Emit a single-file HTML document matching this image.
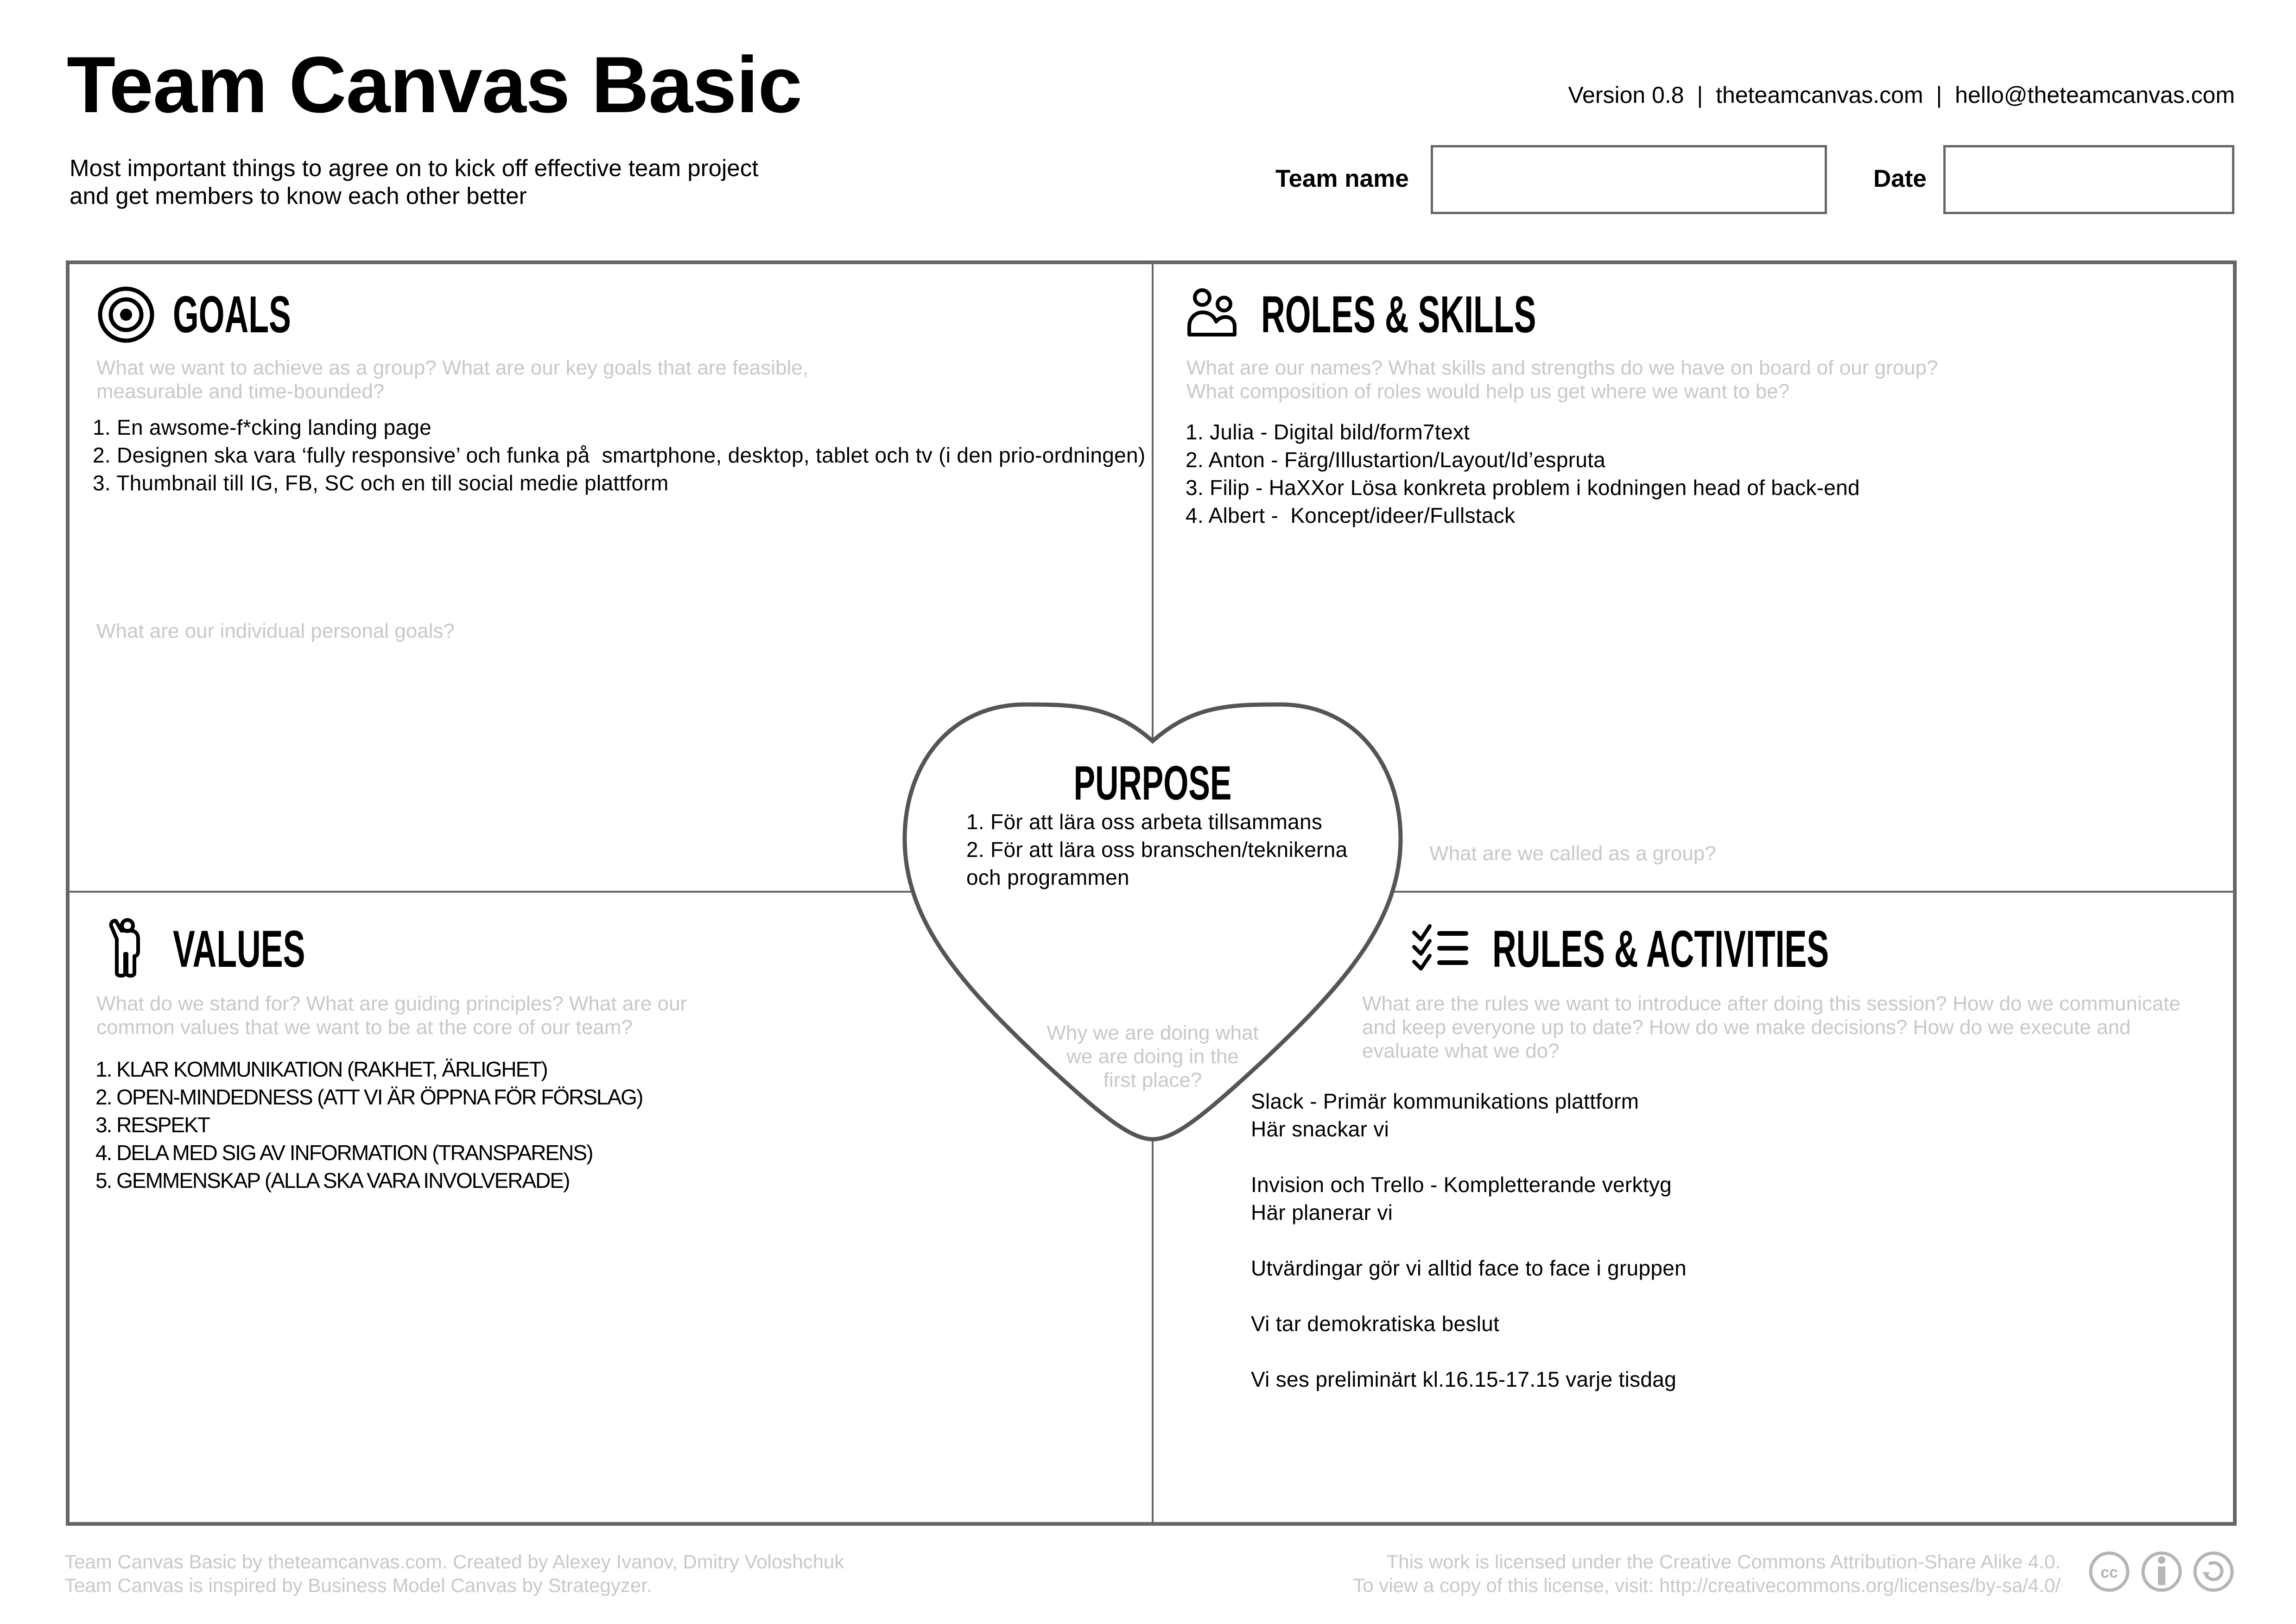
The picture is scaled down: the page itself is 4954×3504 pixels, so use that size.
<!DOCTYPE html>
<html><head><meta charset="utf-8"><style>
*{margin:0;padding:0;box-sizing:border-box}
body{width:4954px;height:3504px;background:#fff;position:relative;overflow:hidden;font-family:"Liberation Sans",sans-serif;color:#000}
.a{position:absolute;white-space:nowrap}
.h{font-family:"Liberation Sans",sans-serif;font-weight:bold;font-size:112px;line-height:120px;transform:scaleX(0.64);transform-origin:0 0}
.g{color:#c8c8c8;font-size:44px;line-height:51px}
.it{font-size:46px;line-height:60px;letter-spacing:0.3px}
.box{position:absolute;border:5px solid #666;background:#fff}
</style></head><body>
<div class="a" style="left:144px;top:88px;font-size:172px;font-weight:bold;line-height:190px;letter-spacing:-1px">Team Canvas Basic</div>
<div class="a" style="left:150px;top:333px;font-size:51px;line-height:60px">Most important things to agree on to kick off effective team project<br>and get members to know each other better</div>
<div class="a" style="right:132px;top:175px;font-size:50px;line-height:60px">Version 0.8 &nbsp;|&nbsp; theteamcanvas.com &nbsp;|&nbsp; hello@theteamcanvas.com</div>
<div class="a" style="left:2752px;top:356px;font-size:53px;font-weight:bold;line-height:60px">Team name</div>
<div class="box" style="left:3087px;top:313px;width:855px;height:149px"></div>
<div class="a" style="left:4042px;top:356px;font-size:53px;font-weight:bold;line-height:60px">Date</div>
<div class="box" style="left:4193px;top:313px;width:628px;height:149px"></div>

<svg class="a" style="left:0;top:0" width="4954" height="3504" viewBox="0 0 4954 3504">
<rect x="146" y="566" width="4676" height="2722" fill="none" stroke="#666" stroke-width="8"/>
<line x1="2487" y1="566" x2="2487" y2="3288" stroke="#666" stroke-width="4"/>
<line x1="146" y1="1924" x2="4822" y2="1924" stroke="#666" stroke-width="4"/>
<path d="M2487,1599 C2400,1522 2320,1520 2212,1520 C2050,1520 1952,1650 1952,1810 C1952,1990 2080,2130 2250,2290 C2380,2410 2440,2458 2487,2458 C2534,2458 2594,2410 2724,2290 C2894,2130 3022,1990 3022,1810 C3022,1650 2924,1520 2762,1520 C2654,1520 2574,1522 2487,1599 Z" fill="#fff" stroke="#555" stroke-width="9"/>
<circle cx="272" cy="679" r="56" fill="none" stroke="#000" stroke-width="9"/>
<circle cx="272" cy="679" r="33" fill="none" stroke="#000" stroke-width="9"/>
<circle cx="272" cy="679" r="13" fill="#000"/>
<g fill="none" stroke="#000" stroke-width="8" stroke-linejoin="round">
<circle cx="2594" cy="642" r="16"/><circle cx="2641" cy="656" r="14"/>
<path d="M2566,722 L2566,705 C2566,685 2580,674 2595,674 C2610,674 2620,683 2624,694 C2630,686 2638,684 2645,684 C2656,684 2664,692 2664,705 L2664,722 Z"/>
</g>
<path d="M250,1987 C243,1985 238,1992 240,1998 L252,2026 L252,2100 C252,2107 270,2107 270,2100 L270,2058 L273,2058 L273,2100 C273,2107 290,2107 290,2100 L290,2063 C296,2063 298,2058 298,2052 L298,2025 C298,2015 292,2008 282,2008 L262,2008 Z" fill="none" stroke="#000" stroke-width="8" stroke-linejoin="round"/>
<circle cx="275" cy="1997" r="12" fill="none" stroke="#000" stroke-width="8"/>
<g fill="none" stroke="#000" stroke-width="8" stroke-linecap="round" stroke-linejoin="round">
<path d="M3051,2012 L3066,2027 L3085,1998"/>
<path d="M3051,2043 L3066,2058 L3085,2030"/>
<path d="M3051,2075 L3066,2090 L3085,2062"/>
<line x1="3106" y1="2014" x2="3163" y2="2014" stroke-width="10"/>
<line x1="3106" y1="2046" x2="3163" y2="2046" stroke-width="10"/>
<line x1="3106" y1="2077" x2="3163" y2="2077" stroke-width="10"/>
</g>
<g fill="none" stroke="#b5b5b5" stroke-width="7">
<circle cx="4551" cy="3391" r="40"/><circle cx="4664" cy="3391" r="40"/><circle cx="4776" cy="3391" r="40"/>
<path d="M4766,3375 A18,18 0 1 1 4760,3398"/>
</g>
<text x="4551" y="3404" text-anchor="middle" font-family="Liberation Sans" font-weight="bold" font-size="34" fill="#b5b5b5">cc</text>
<circle cx="4664" cy="3366" r="8" fill="#b5b5b5"/>
<rect x="4656" y="3380" width="16" height="40" fill="#b5b5b5"/>
<path d="M4752,3392 L4768,3392 L4760,3404 Z" fill="#b5b5b5"/>
</svg>

<div class="a h" style="left:373px;top:619px">GOALS</div>
<div class="a g" style="left:208px;top:768px">What we want to achieve as a group? What are our key goals that are feasible,<br>measurable and time-bounded?</div>
<div class="a it" style="left:200px;top:892px">1. En awsome-f*cking landing page<br>2. Designen ska vara ‘fully responsive’ och funka på &nbsp;smartphone, desktop, tablet och tv (i den prio-ordningen)<br>3. Thumbnail till IG, FB, SC och en till social medie plattform</div>
<div class="a g" style="left:208px;top:1336px">What are our individual personal goals?</div>

<div class="a h" style="left:2721px;top:619px">ROLES &amp; SKILLS</div>
<div class="a g" style="left:2560px;top:768px">What are our names? What skills and strengths do we have on board of our group?<br>What composition of roles would help us get where we want to be?</div>
<div class="a it" style="left:2558px;top:902px">1. Julia - Digital bild/form7text<br>2. Anton - Färg/Illustartion/Layout/Id’espruta<br>3. Filip - HaXXor Lösa konkreta problem i kodningen head of back-end<br>4. Albert - &nbsp;Koncept/ideer/Fullstack</div>

<div class="a" style="left:2487px;top:1630px;transform:translateX(-50%)"><div class="h" style="font-size:104px;transform:scaleX(0.67);transform-origin:50% 0">PURPOSE</div></div>
<div class="a it" style="left:2085px;top:1743px">1. För att lära oss arbeta tillsammans<br>2. För att lära oss branschen/teknikerna<br>och programmen</div>
<div class="a g" style="left:3084px;top:1816px">What are we called as a group?</div>
<div class="a g" style="left:2487px;top:2203px;transform:translateX(-50%);text-align:center">Why we are doing what<br>we are doing in the<br>first place?</div>

<div class="a h" style="left:373px;top:1988px">VALUES</div>
<div class="a g" style="left:208px;top:2140px">What do we stand for? What are guiding principles? What are our<br>common values that we want to be at the core of our team?</div>
<div class="a it" style="left:206px;top:2277px;letter-spacing:-2px">1. KLAR KOMMUNIKATION (RAKHET, ÄRLIGHET)<br>2. OPEN-MINDEDNESS (ATT VI ÄR ÖPPNA FÖR FÖRSLAG)<br>3. RESPEKT<br>4. DELA MED SIG AV INFORMATION (TRANSPARENS)<br>5. GEMMENSKAP (ALLA SKA VARA INVOLVERADE)</div>

<div class="a h" style="left:3220px;top:1988px">RULES &amp; ACTIVITIES</div>
<div class="a g" style="left:2939px;top:2140px">What are the rules we want to introduce after doing this session? How do we communicate<br>and keep everyone up to date? How do we make decisions? How do we execute and<br>evaluate what we do?</div>
<div class="a it" style="left:2699px;top:2346px">Slack - Primär kommunikations plattform<br>Här snackar vi<br><br>Invision och Trello - Kompletterande verktyg<br>Här planerar vi<br><br>Utvärdingar gör vi alltid face to face i gruppen<br><br>Vi tar demokratiska beslut<br><br>Vi ses preliminärt kl.16.15-17.15 varje tisdag</div>

<div class="a g" style="left:139px;top:3344px;font-size:42px">Team Canvas Basic by theteamcanvas.com. Created by Alexey Ivanov, Dmitry Voloshchuk<br>Team Canvas is inspired by Business Model Canvas by Strategyzer.</div>
<div class="a g" style="right:508px;top:3344px;font-size:42px;text-align:right">This work is licensed under the Creative Commons Attribution-Share Alike 4.0.<br>To view a copy of this license, visit: http://creativecommons.org/licenses/by-sa/4.0/</div>
</body></html>
